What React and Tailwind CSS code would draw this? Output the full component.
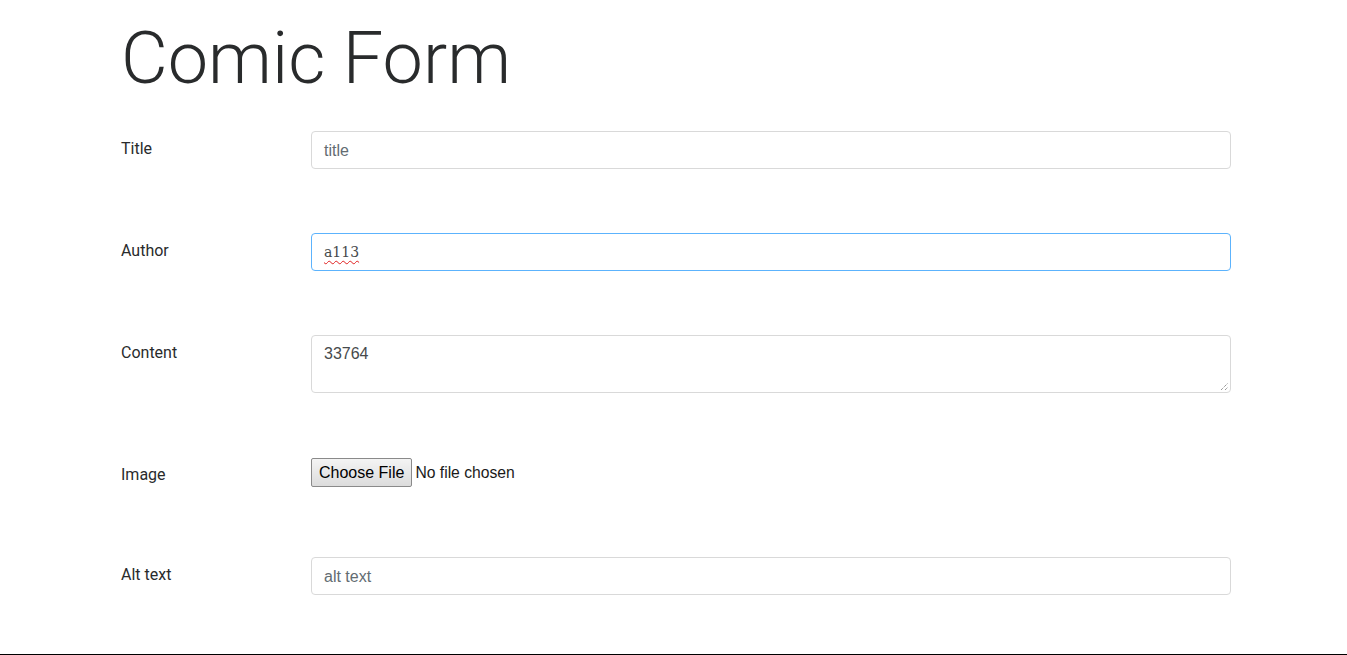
export default function App() {
  const label =
    "w-[190px] shrink-0 pt-[8px] text-[16px] leading-[20px] text-[#292b2c] font-['Roboto',sans-serif]";
  const field =
    "w-[920px] h-[38px] rounded-[4px] border bg-white px-[12px] py-[8px] text-[16px] leading-[20px] font-['Liberation_Sans',Arial,sans-serif]";
  return (
    <div className="h-[655px] w-full overflow-hidden border-b border-black bg-white">
      <div className="ml-[121px] pt-[19px]">
        <h1 className="mb-[33px] h-[79px] text-[72px] font-light leading-[79px] text-[#292b2c] font-['Roboto',sans-serif]">
          Comic Form
        </h1>

        <div className="mb-[64px] flex">
          <div className={label}>Title</div>
          <div className={field + " border-[#d9d9d9] pt-[9px] text-[#636c72]"}>title</div>
        </div>

        <div className="mb-[64px] flex">
          <div className={label}>Author</div>
          <div className={field + " border-[#5cb3fd] text-[#464a4c]"}>
            <span className="text-[14px] font-['DejaVu_Serif',serif] underline decoration-wavy decoration-[#e02020] decoration-1 underline-offset-[3px]">
              a113
            </span>
          </div>
        </div>

        <div className="mb-[65px] flex">
          <div className={label}>Content</div>
          <div className="relative h-[58px] w-[920px] rounded-[4px] border border-[#d9d9d9] bg-white px-[12px] py-[8px] text-[16px] leading-[20px] text-[#464a4c] font-['Liberation_Sans',Arial,sans-serif]">
            33764
            <svg
              className="absolute bottom-[1px] right-[1px]"
              width="9"
              height="9"
              viewBox="0 0 9 9"
            >
              <path d="M1 8 L8 1" stroke="#6f6f6f" strokeWidth="1" strokeDasharray="1 1" />
              <path d="M5 8 L8 5" stroke="#6f6f6f" strokeWidth="1" strokeDasharray="1 1" />
            </svg>
          </div>
        </div>

        <div className="mb-[70px] flex">
          <div className={label.replace("pt-[8px]", "pt-[7px]")}>Image</div>
          <div className="flex h-[29px] items-center font-['Liberation_Sans',Arial,sans-serif] text-[16px]">
            <div className="flex h-[29px] items-center rounded-[2px] border border-[#8a8a8a] bg-gradient-to-b from-[#f4f4f4] to-[#dcdcdc] px-[7px] text-black">
              Choose File
            </div>
            <span className="ml-[3px] text-[15.7px] text-[#1a1a1a]">No file chosen</span>
          </div>
        </div>

        <div className="flex">
          <div className={label}>Alt text</div>
          <div className={field + " border-[#d9d9d9] pt-[9px] text-[#636c72]"}>alt text</div>
        </div>
      </div>
    </div>
  );
}
